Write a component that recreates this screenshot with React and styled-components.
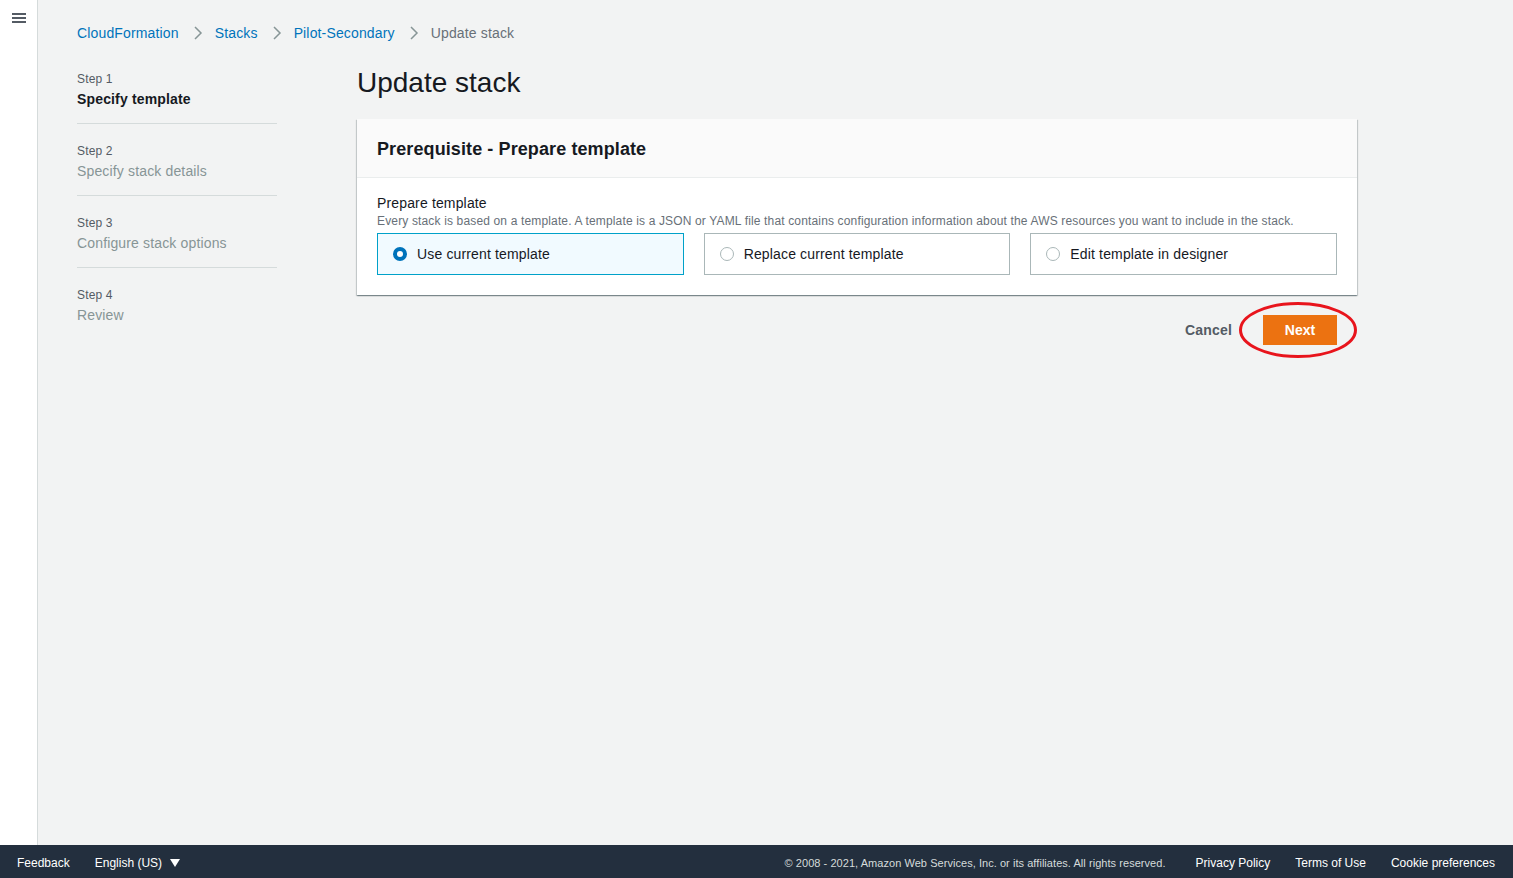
import React from 'react'
import styled, { createGlobalStyle } from 'styled-components'

const Global = createGlobalStyle`
  html, body { margin: 0; padding: 0; height: 100%; }
  body {
    font-family: "Liberation Sans", Arial, sans-serif;
    background: #f2f3f3;
    color: #16191f;
    letter-spacing: 0.15px;
  }
  #root { height: 100%; }
`

const Page = styled.div`
  display: flex;
  flex-direction: column;
  height: 878px;
`

const Body = styled.div`
  display: flex;
  flex: 1;
  min-height: 0;
`

const SideNav = styled.nav`
  width: 38px;
  flex: none;
  background: #fff;
  border-right: 1px solid #d5dbdb;
  display: flex;
  justify-content: center;
  padding-top: 11px;
  box-sizing: border-box;
`

const Burger = styled.button`
  border: 0;
  background: none;
  width: 16px;
  height: 14px;
  display: flex;
  flex-direction: column;
  justify-content: space-between;
  padding: 2px 1px;
  box-sizing: border-box;
  span {
    display: block;
    height: 2px;
    background: #545b64;
  }
`

const Main = styled.main`
  flex: 1;
  padding: 23px 0 0 39px;
`

const Crumbs = styled.div`
  display: flex;
  align-items: center;
  font-size: 14px;
  line-height: 20px;
  height: 20px;
`

const Crumb = styled.a`
  color: ${p => (p.current ? '#687078' : '#0073bb')};
  text-decoration: none;
`

const Chevron = styled.span`
  display: flex;
  margin: 0 12px 0 14px;
  svg { display: block; }
`

const Layout = styled.div`
  display: grid;
  grid-template-columns: 200px 1000px;
  column-gap: 80px;
  margin-top: 22px;
`

const Steps = styled.ol`
  list-style: none;
  margin: 6px 0 0;
  padding: 0;
`

const StepItem = styled.li`
  padding-bottom: 13px;
  margin-bottom: 19px;
  border-bottom: ${p => (p.last ? '0' : '1px solid #d5dbdb')};
`

const StepNo = styled.div`
  font-size: 12px;
  line-height: 16px;
  color: #545b64;
`

const StepName = styled.div`
  font-size: 14px;
  line-height: 22px;
  margin-top: 1px;
  color: ${p => (p.active ? '#16191f' : '#879596')};
  font-weight: ${p => (p.active ? 700 : 400)};
`

const Title = styled.h1`
  margin: 0;
  font-size: 28px;
  line-height: 36px;
  font-weight: 400;
  letter-spacing: 0;
  color: #16191f;
`

const Panel = styled.section`
  margin-top: 18px;
  background: #fff;
  box-shadow: 0 1px 1px 0 rgba(0, 28, 36, 0.3), 1px 1px 1px 0 rgba(0, 28, 36, 0.15),
    -1px 1px 1px 0 rgba(0, 28, 36, 0.15);
`

const PanelHeader = styled.div`
  background: #fafafa;
  border-bottom: 1px solid #eaeded;
  padding: 19px 20px 17px;
  h2 {
    margin: 0;
    font-size: 18px;
    line-height: 22px;
    font-weight: 700;
    letter-spacing: 0.1px;
  }
`

const PanelBody = styled.div`
  padding: 14px 20px 20px;
`

const Label = styled.div`
  font-size: 14px;
  line-height: 22px;
`

const Desc = styled.div`
  font-size: 12px;
  line-height: 16px;
  margin-top: -1px;
  color: #687078;
`

const Tiles = styled.div`
  display: grid;
  grid-template-columns: repeat(3, 1fr);
  column-gap: 20px;
  margin-top: 4px;
`

const Tile = styled.label`
  display: flex;
  align-items: center;
  gap: 10px;
  height: 42px;
  box-sizing: border-box;
  padding: 0 15px;
  border: 1px solid ${p => (p.selected ? '#00a1c9' : '#aab7b8')};
  background: ${p => (p.selected ? '#f1faff' : '#fff')};
  font-size: 14px;
  color: #16191f;
`

const Radio = styled.span`
  width: 14px;
  height: 14px;
  flex: none;
  box-sizing: border-box;
  border-radius: 50%;
  border: ${p => (p.checked ? '4px solid #0073bb' : '1px solid #aab7b8')};
  background: #fff;
`

const Actions = styled.div`
  display: flex;
  justify-content: flex-end;
  align-items: center;
  gap: 31px;
  margin-top: 20px;
  padding-right: 20px;
`

const LinkButton = styled.button`
  border: 0;
  background: none;
  padding: 0;
  font: 700 14px/30px "Liberation Sans", Arial, sans-serif;
  letter-spacing: 0.2px;
  color: #545b64;
`

const PrimaryWrap = styled.div`
  position: relative;
`

const Primary = styled.button`
  border: 0;
  background: #ec7211;
  color: #fff;
  width: 74px;
  height: 30px;
  font: 700 14px/30px "Liberation Sans", Arial, sans-serif;
  padding: 0;
`

const Highlight = styled.svg`
  position: absolute;
  left: -25px;
  top: -14px;
  pointer-events: none;
`

const Footer = styled.footer`
  height: 33px;
  flex: none;
  box-sizing: border-box;
  background: #232f3e;
  display: flex;
  align-items: center;
  padding: 3px 18px 0 17px;
  font-size: 12px;
  letter-spacing: 0;
  color: #fff;
`

const FootLink = styled.a`
  color: #fff;
  text-decoration: none;
  margin-right: ${p => p.gap || 0}px;
  display: flex;
  align-items: center;
  gap: 8px;
`

const Copy = styled.span`
  margin-left: auto;
  margin-right: 30px;
  font-size: 11px;
  letter-spacing: 0.05px;
  color: #d5dbdb;
`

const Chev = () => (
  <Chevron>
    <svg width="10" height="16" viewBox="0 0 10 16">
      <path d="M2 2l6 6-6 6" stroke="#879596" strokeWidth="1.5" fill="none" />
    </svg>
  </Chevron>
)

const steps = ['Specify template', 'Specify stack details', 'Configure stack options', 'Review']
const options = ['Use current template', 'Replace current template', 'Edit template in designer']

export default function App() {
  return (
    <Page>
      <Global />
      <Body>
        <SideNav>
          <Burger aria-label="menu">
            <span />
            <span />
            <span />
          </Burger>
        </SideNav>
        <Main>
          <Crumbs>
            <Crumb href="#">CloudFormation</Crumb>
            <Chev />
            <Crumb href="#">Stacks</Crumb>
            <Chev />
            <Crumb href="#">Pilot-Secondary</Crumb>
            <Chev />
            <Crumb current>Update stack</Crumb>
          </Crumbs>
          <Layout>
            <Steps>
              {steps.map((s, i) => (
                <StepItem key={s} last={i === steps.length - 1}>
                  <StepNo>Step {i + 1}</StepNo>
                  <StepName active={i === 0}>{s}</StepName>
                </StepItem>
              ))}
            </Steps>
            <div>
              <Title>Update stack</Title>
              <Panel>
                <PanelHeader>
                  <h2>Prerequisite - Prepare template</h2>
                </PanelHeader>
                <PanelBody>
                  <Label>Prepare template</Label>
                  <Desc>
                    Every stack is based on a template. A template is a JSON or YAML file that contains configuration information about the AWS resources you want to include in the stack.
                  </Desc>
                  <Tiles>
                    {options.map((o, i) => (
                      <Tile key={o} selected={i === 0}>
                        <Radio checked={i === 0} />
                        {o}
                      </Tile>
                    ))}
                  </Tiles>
                </PanelBody>
              </Panel>
              <Actions>
                <LinkButton>Cancel</LinkButton>
                <PrimaryWrap>
                  <Primary>Next</Primary>
                  <Highlight width="122" height="58" viewBox="0 0 122 58">
                    <ellipse cx="60" cy="29" rx="57.5" ry="26.5" fill="none" stroke="#e8141c" strokeWidth="3" />
                  </Highlight>
                </PrimaryWrap>
              </Actions>
            </div>
          </Layout>
        </Main>
      </Body>
      <Footer>
        <FootLink href="#" gap={25}>Feedback</FootLink>
        <FootLink href="#">
          English (US)
          <svg width="10" height="8" viewBox="0 0 10 8">
            <path d="M0 0h10L5 8z" fill="#fff" />
          </svg>
        </FootLink>
        <Copy>© 2008 - 2021, Amazon Web Services, Inc. or its affiliates. All rights reserved.</Copy>
        <FootLink href="#" gap={25}>Privacy Policy</FootLink>
        <FootLink href="#" gap={25}>Terms of Use</FootLink>
        <FootLink href="#">Cookie preferences</FootLink>
      </Footer>
    </Page>
  )
}
